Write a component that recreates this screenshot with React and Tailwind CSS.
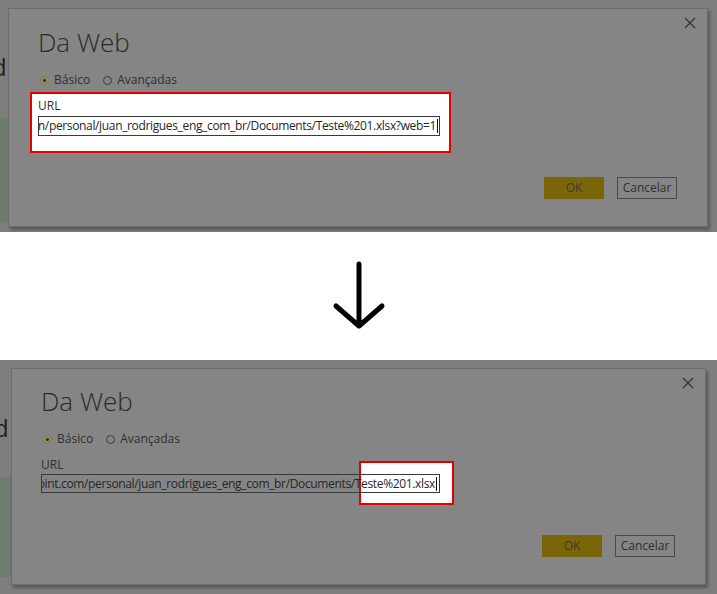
import React from "react";

const font = { fontFamily: '"Open Sans", "Noto Sans", sans-serif' };

function Radio({ checked, label }) {
    return (
        <div className="flex items-center gap-[5px]">
            <span
                className={
                    checked
                        ? "flex h-[9px] w-[9px] items-center justify-center rounded-full border border-[#8f7d2a] bg-[#8a8a7a]"
                        : "h-[9px] w-[9px] rounded-full border border-[#3c3c3c]"
                }
            >
                {checked && <span className="h-[3px] w-[3px] rounded-full bg-[#2a2a2a]" />}
            </span>
            <span className="text-[12px] leading-[16px] text-[#2f2f2f]">{label}</span>
        </div>
    );
}

function Dialog({ bottom, url }) {
    return (
        <div
            className={
                bottom
                    ? "relative ml-[11px] mt-[8px] h-[217px] w-[695px] border border-[#6c6c6c] bg-[#858585] shadow-[2px_3px_3px_rgba(0,0,0,0.3)]"
                    : "relative ml-[8px] mt-[8px] h-[219px] w-[700px] border border-[#6c6c6c] bg-[#858585] shadow-[2px_3px_3px_rgba(0,0,0,0.3)]"
            }
        >
            {/* highlight annotation */}
            <div
                className={
                    bottom
                        ? "absolute left-[347px] top-[92px] h-[44px] w-[95px] border-2 border-[#e00000] bg-white"
                        : "absolute left-[21px] top-[83px] h-[61px] w-[421px] border-2 border-[#e00000] bg-white"
                }
            />

            <button className="absolute right-[11px] top-[8px] text-[#303030]">
                <svg width="12" height="12" viewBox="0 0 12 12">
                    <path d="M1 1L11 11M11 1L1 11" stroke="currentColor" strokeWidth="1.1" />
                </svg>
            </button>

            <div className="relative z-10 flex h-full flex-col px-[29px]">
                <h1 className={bottom ? "mt-[17px] text-[26px] font-light leading-[31px] text-[#2b2b2b]" : "mt-[18px] text-[26px] font-light leading-[31px] text-[#2b2b2b]"}>
                    Da Web
                </h1>
                <div className="mt-[14px] flex items-center gap-[13px] pl-[2px]">
                    <Radio checked label="Básico" />
                    <Radio label="Avançadas" />
                </div>
                <div className="mt-[10px] text-[12px] leading-[16px] text-[#2f2f2f]">URL</div>
                <div
                    className={
                        bottom
                            ? "mt-[1px] flex h-[19px] w-[399px] items-center justify-end overflow-hidden border border-[#3a3a3a] pr-[2px]"
                            : "mt-[2px] flex h-[20px] w-[402px] items-center justify-end overflow-hidden border border-[#3a3a3a] bg-white pr-[1px]"
                    }
                >
                    <span className="whitespace-nowrap text-[12px] leading-[16px] tracking-[-0.35px] text-[#262626]">{url}</span>
                    <span className="ml-[1px] h-[14px] w-[1px] shrink-0 bg-[#111]" />
                </div>
                <div className="mt-auto mb-[27px] flex justify-end gap-[13px] pr-[1px]">
                    <button className="h-[22px] w-[60px] bg-[#7a6609] text-[12px] text-[#3a3a3a]">OK</button>
                    <button className="h-[22px] w-[60px] border border-[#484848] text-[12px] text-[#2f2f2f]">Cancelar</button>
                </div>
            </div>
        </div>
    );
}

function Panel({ bottom, url }) {
    return (
        <div className={bottom ? "relative h-[234px] overflow-hidden bg-[#7e7e7e]" : "relative h-[232px] overflow-hidden bg-[#7e7e7e]"}>
            {/* app behind the overlay */}
            <span className={bottom ? "absolute -left-[6px] top-[56px] text-[24px] leading-none text-[#202020]" : "absolute -left-[8px] top-[55px] text-[24px] leading-none text-[#202020]"}>d</span>
            <div className={bottom ? "absolute left-0 top-[117px] h-[100px] w-[12px] bg-[#6d7c6f]" : "absolute left-0 top-[118px] h-[104px] w-[9px] bg-[#6d7c6f]"} />
            <Dialog bottom={bottom} url={url} />
        </div>
    );
}

export default function App() {
    return (
        <div className="flex h-[594px] w-[717px] flex-col bg-white" style={font}>
            <Panel url="https://juanrodrigues-my.sharepoint.com/personal/juan_rodrigues_eng_com_br/Documents/Teste%201.xlsx?web=1" />
            <div className="flex h-[128px] items-center justify-center">
                <svg width="60" height="76" viewBox="0 0 60 76">
                    <path d="M30 6V68M7 48L30 68L53 48" fill="none" stroke="#000" strokeWidth="5" strokeLinecap="round" strokeLinejoin="round" />
                </svg>
            </div>
            <Panel bottom url="https://juanrodrigues-my.sharepoint.com/personal/juan_rodrigues_eng_com_br/Documents/Teste%201.xlsx" />
        </div>
    );
}
